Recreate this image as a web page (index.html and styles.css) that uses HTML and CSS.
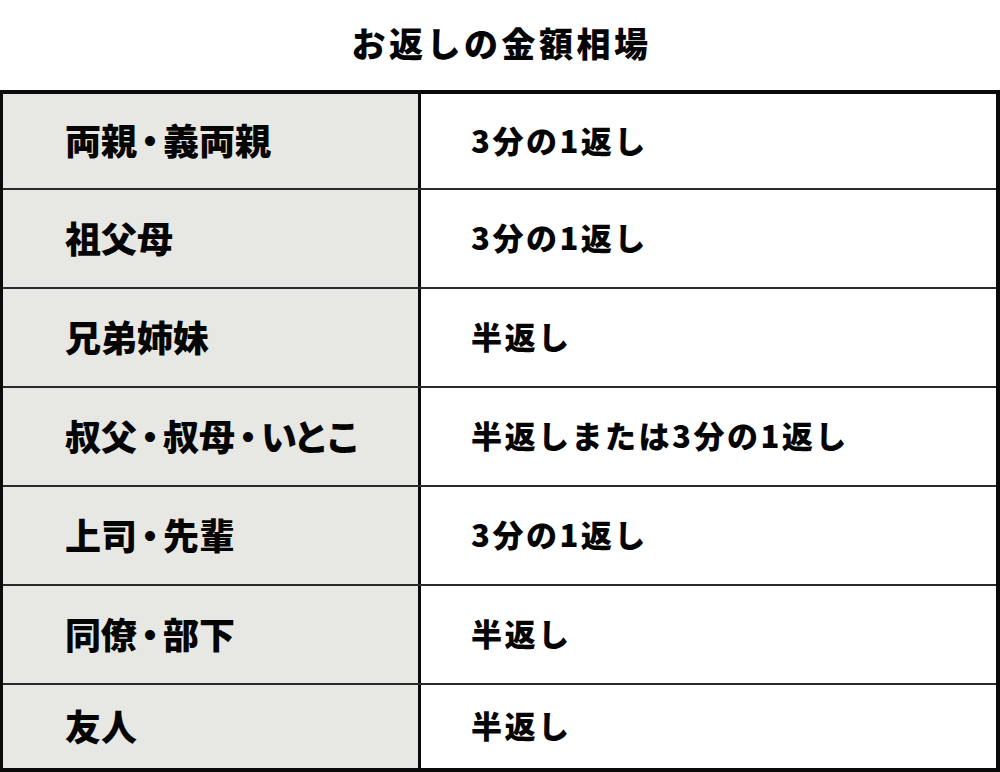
FILE: index.html
```html
<!DOCTYPE html>
<html lang="ja">
<head>
<meta charset="utf-8">
<link rel="stylesheet" href="styles.css">
</head>
<body>
<div class="page">
  <h1 class="title">お返しの金額相場</h1>
  <div class="table">
    <div class="row"><div class="cell key">両<span class="tight">親・</span>義両親</div><div class="cell val">3分の1返し</div></div>
    <div class="row"><div class="cell key">祖父母</div><div class="cell val">3分の1返し</div></div>
    <div class="row"><div class="cell key">兄弟姉妹</div><div class="cell val">半返し</div></div>
    <div class="row"><div class="cell key">叔<span class="tight">父・</span>叔<span class="tight">母・</span><span class="kana">いとこ</span></div><div class="cell val">半返しまたは3分の1返し</div></div>
    <div class="row"><div class="cell key">上<span class="tight">司・</span>先輩</div><div class="cell val">3分の1返し</div></div>
    <div class="row"><div class="cell key">同<span class="tight">僚・</span>部下</div><div class="cell val">半返し</div></div>
    <div class="row last"><div class="cell key">友人</div><div class="cell val">半返し</div></div>
  </div>
</div>
</body>
</html>
```
FILE: styles.css
```css
html, body {
  margin: 0;
  padding: 0;
  background: #ffffff;
}
body {
  font-family: "Noto Sans CJK JP", "Noto Sans", sans-serif;
  color: #050505;
}
.page {
  width: 1000px;
  height: 772px;
  overflow: hidden;
}
.title {
  margin: 0;
  height: 90px;
  display: flex;
  align-items: center;
  justify-content: center;
  font-size: 34px;
  font-weight: 900;
  letter-spacing: 3.5px;
  padding-left: 3px;
  padding-bottom: 5px;
  box-sizing: border-box;
}
.table {
  border-top: 4px solid #0a0a0a;
  border-left: 3px solid #0a0a0a;
  border-right: 4px solid #0a0a0a;
  border-bottom: 4px solid #0a0a0a;
  box-sizing: border-box;
  height: 682px;
  display: flex;
  flex-direction: column;
}
.row {
  display: grid;
  grid-template-columns: 418px 1fr;
  height: 97px;
  flex: none;
  border-bottom: 2px solid #2a2a2a;
}
.row:first-child {
  height: 94px;
}
.row.last {
  flex: 1;
  border-bottom: none;
}
.cell {
  display: flex;
  align-items: center;
  padding-bottom: 4px;
  box-sizing: border-box;
  font-weight: 900;
  white-space: nowrap;
}
.key {
  background: #e7e7e3;
  border-right: 3px solid #0a0a0a;
  padding-left: 62px;
  font-size: 36px;
}
.tight {
  letter-spacing: -5px;
}
.kana {
  letter-spacing: -4px;
}
.val {
  background: #ffffff;
  padding-left: 50px;
  font-size: 31px;
  letter-spacing: 2.5px;
}
```
